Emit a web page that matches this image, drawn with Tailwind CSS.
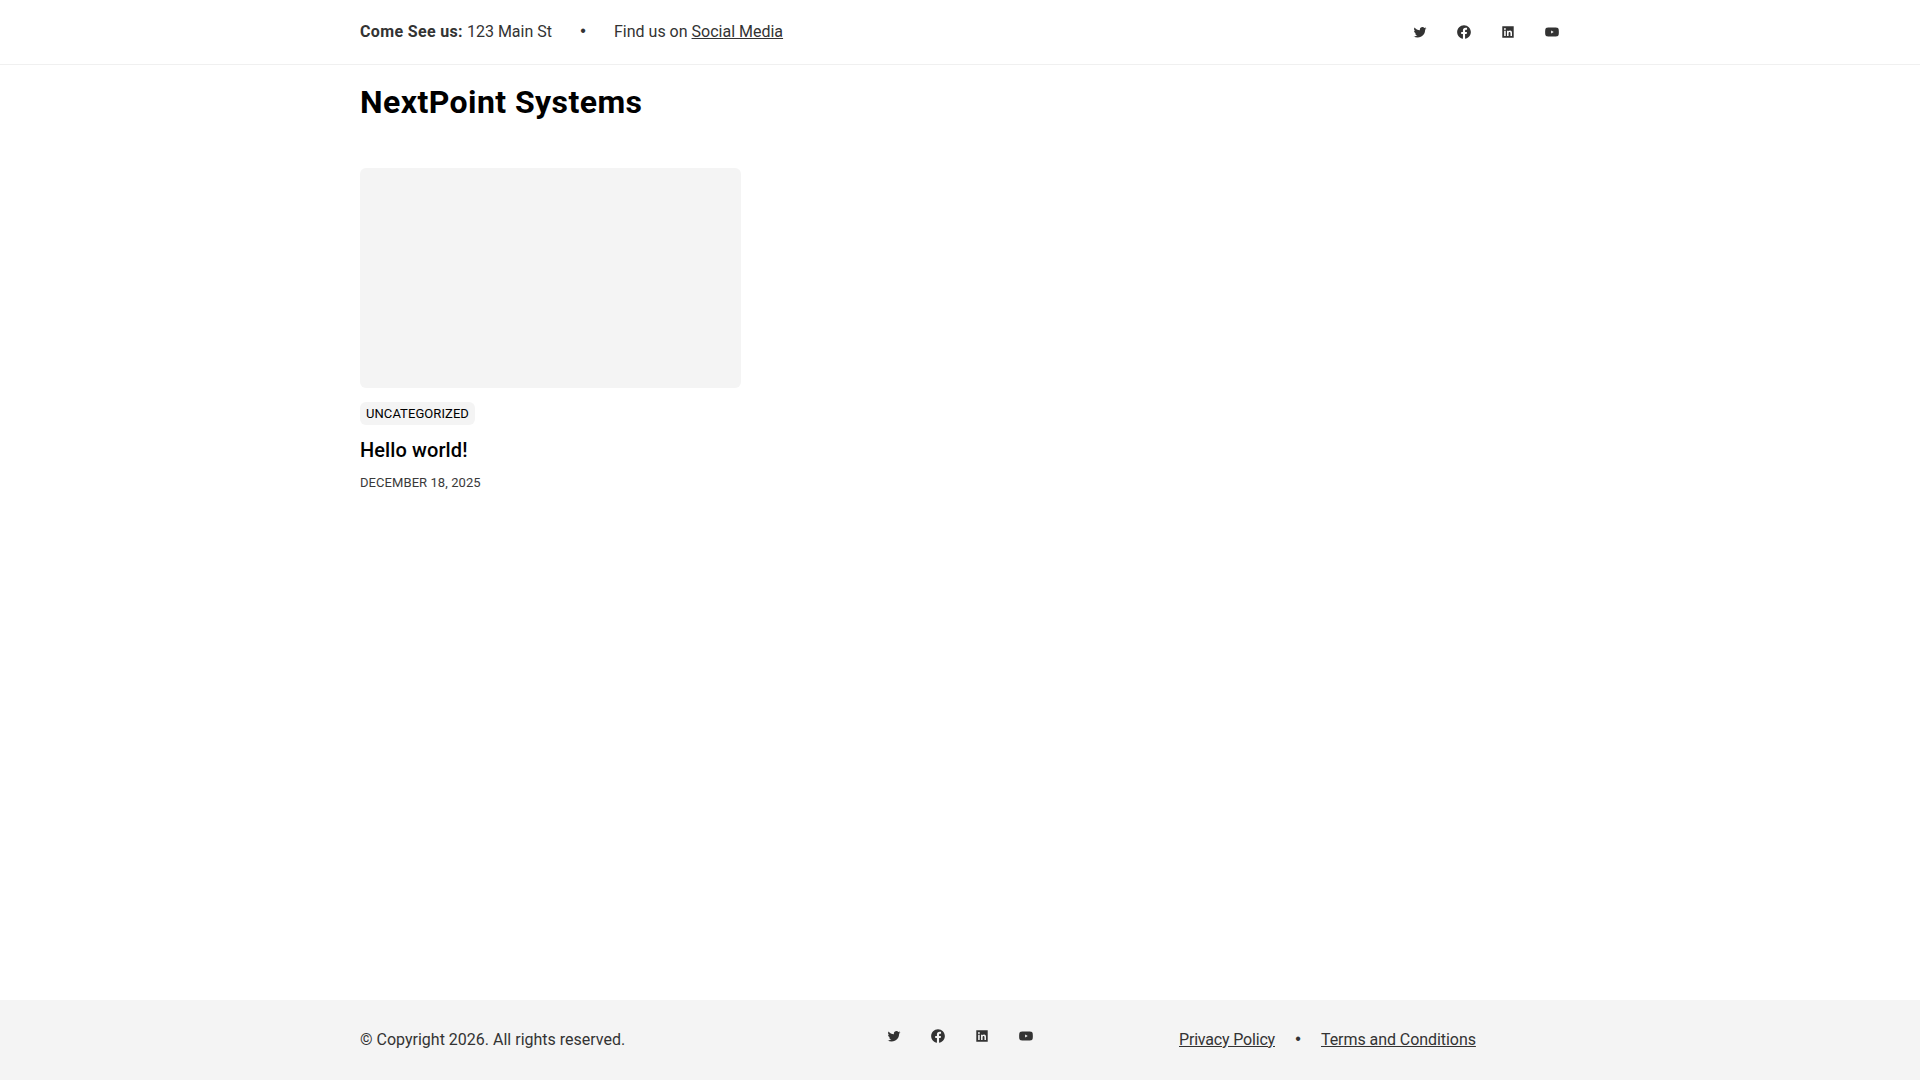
<!DOCTYPE html>
<html lang="en">
<head>
  <meta charset="UTF-8">
  <title>NextPoint Systems</title>
  <script src="https://cdn.jsdelivr.net/npm/@tailwindcss/browser@4"></script>
</head>
<body class="bg-white text-[#333333] font-['Roboto',sans-serif] text-base">
  <div class="min-h-[1080px] flex flex-col">

    <!-- Top bar -->
    <div class="h-[65px] border-b border-[#f0f0f0]">
      <div class="w-[1200px] ml-[360px] h-full flex items-center justify-between">
        <div class="flex items-center">
          <span><strong class="font-bold tracking-[0.35px]">Come See us:</strong> 123 Main St</span>
          <span class="w-[62px] text-center font-['Liberation_Sans',sans-serif] -translate-y-px">•</span>
          <span>Find us on <a href="#" class="underline">Social Media</a></span>
        </div>
        <div class="flex items-center gap-7">
          <svg class="w-4 h-4 fill-current" viewBox="-1 -1 26 26"><path d="M22.46 6c-.77.35-1.6.58-2.46.69.88-.53 1.56-1.37 1.88-2.38-.83.5-1.75.85-2.72 1.05C18.37 4.5 17.26 4 16 4c-2.35 0-4.27 1.92-4.27 4.29 0 .34.04.67.11.98C8.28 9.09 5.11 7.38 3 4.79c-.37.63-.58 1.37-.58 2.15 0 1.49.75 2.81 1.91 3.56-.71 0-1.37-.2-1.95-.5v.03c0 2.08 1.48 3.82 3.44 4.21-.36.1-.74.15-1.13.15-.27 0-.54-.03-.8-.08.54 1.69 2.11 2.95 4 2.98-1.46 1.16-3.31 1.84-5.33 1.84-.34 0-.68-.02-1.02-.06C3.44 20.29 5.7 21 8.12 21 16 21 20.33 14.46 20.33 8.79c0-.19 0-.37-.01-.56.84-.6 1.56-1.36 2.14-2.23z"/></svg>
          <svg class="w-4 h-4 fill-current" viewBox="-2 -2 28 28"><path d="M24 12.07C24 5.4 18.63 0 12 0S0 5.4 0 12.07c0 6.03 4.39 11.02 10.13 11.93v-8.44H7.08v-3.49h3.05V9.41c0-3.02 1.79-4.69 4.53-4.69 1.31 0 2.68.24 2.68.24v2.97h-1.51c-1.49 0-1.96.93-1.96 1.89v2.25h3.33l-.53 3.49h-2.8V24C19.61 23.09 24 18.1 24 12.07z"/></svg>
          <svg class="w-4 h-4 fill-current" viewBox="-2 -2 28 28"><path d="M22 2H2v20h20V2zM8 19H5.3V9.6H8V19zM6.65 8.4a1.6 1.6 0 1 1 0-3.2 1.6 1.6 0 0 1 0 3.2zM19 19h-2.700v-4.600c0-1.100 0-2.500-1.500-2.500s-1.800 1.200-1.800 2.400V19h-2.700V9.600h2.600v1.300h.04c.36-.7 1.250-1.500 2.600-1.500 2.750 0 3.460 1.800 3.460 4.200V19z"/></svg>
          <svg class="w-4 h-4 fill-current" viewBox="-2 -2 28 28"><path d="M23.5 6.600a3 3 0 0 0-2.100-2.100C19.500 4 12 4 12 4s-7.500 0-9.400.5A3 3 0 0 0 .5 6.600C0 8.500 0 12 0 12s0 3.500 .5 5.400a3 3 0 0 0 2.100 2.100C4.500 20 12 20 12 20s7.500 0 9.400-.5a3 3 0 0 0 2.100-2.100C24 15.500 24 12 24 12s0-3.500-.5-5.400zM10.500 14.500v-5l4.500 2.500-4.500 2.500z"/></svg>
        </div>
      </div>
    </div>

    <!-- Main -->
    <main class="flex-1 w-[1200px] ml-[360px]">
      <h1 class="mt-[17px] text-[32px] leading-[40px] font-bold tracking-[0.43px] text-black">NextPoint Systems</h1>
      <article class="mt-[46px] w-[381px]">
        <div class="h-[220px] bg-[#f4f4f4] rounded-md"></div>
        <span class="inline-block mt-[14px] h-[23px] px-1.5 bg-[#f4f4f4] rounded-md text-[13px] leading-[24px] tracking-[0.07px] text-black">UNCATEGORIZED</span>
        <h2 class="mt-[11px] text-xl leading-7 font-medium tracking-[0.1px] text-black">Hello world!</h2>
        <p class="mt-[9px] text-[13px] leading-5 tracking-[0.07px] text-[#3a3a3a]">DECEMBER 18, 2025</p>
      </article>
    </main>

    <!-- Footer -->
    <footer class="h-[80px] bg-[#f4f4f4]">
      <div class="w-[1200px] ml-[360px] h-full flex items-center">
        <div class="w-[526px]">© Copyright 2026. All rights reserved.</div>
        <div class="w-[293px] flex items-center gap-7 mb-[8px]">
          <svg class="w-4 h-4 fill-current" viewBox="-1 -1 26 26"><path d="M22.46 6c-.77.35-1.6.58-2.46.69.88-.53 1.56-1.37 1.88-2.38-.83.5-1.75.85-2.72 1.05C18.37 4.5 17.26 4 16 4c-2.35 0-4.27 1.92-4.27 4.29 0 .34.04.67.11.98C8.28 9.09 5.11 7.38 3 4.79c-.37.63-.58 1.37-.58 2.15 0 1.49.75 2.81 1.91 3.56-.71 0-1.37-.2-1.95-.5v.03c0 2.08 1.48 3.82 3.44 4.21-.36.1-.74.15-1.13.15-.27 0-.54-.03-.8-.08.54 1.69 2.11 2.95 4 2.98-1.46 1.16-3.31 1.84-5.33 1.84-.34 0-.68-.02-1.02-.06C3.44 20.29 5.7 21 8.12 21 16 21 20.33 14.46 20.33 8.79c0-.19 0-.37-.01-.56.84-.6 1.56-1.36 2.14-2.23z"/></svg>
          <svg class="w-4 h-4 fill-current" viewBox="-2 -2 28 28"><path d="M24 12.07C24 5.4 18.63 0 12 0S0 5.4 0 12.07c0 6.03 4.39 11.02 10.13 11.93v-8.44H7.08v-3.49h3.05V9.41c0-3.02 1.79-4.69 4.53-4.69 1.31 0 2.68.24 2.68.24v2.97h-1.51c-1.49 0-1.96.93-1.96 1.89v2.25h3.33l-.53 3.49h-2.8V24C19.61 23.09 24 18.1 24 12.07z"/></svg>
          <svg class="w-4 h-4 fill-current" viewBox="-2 -2 28 28"><path d="M22 2H2v20h20V2zM8 19H5.3V9.6H8V19zM6.65 8.4a1.6 1.6 0 1 1 0-3.2 1.6 1.6 0 0 1 0 3.2zM19 19h-2.700v-4.600c0-1.100 0-2.500-1.500-2.500s-1.800 1.200-1.800 2.400V19h-2.700V9.600h2.600v1.300h.04c.36-.7 1.250-1.500 2.600-1.500 2.750 0 3.460 1.800 3.460 4.200V19z"/></svg>
          <svg class="w-4 h-4 fill-current" viewBox="-2 -2 28 28"><path d="M23.5 6.600a3 3 0 0 0-2.100-2.100C19.500 4 12 4 12 4s-7.500 0-9.400.5A3 3 0 0 0 .5 6.600C0 8.500 0 12 0 12s0 3.500 .5 5.400a3 3 0 0 0 2.100 2.100C4.500 20 12 20 12 20s7.500 0 9.400-.5a3 3 0 0 0 2.100-2.100C24 15.500 24 12 24 12s0-3.500-.5-5.400zM10.500 14.500v-5l4.500 2.500-4.500 2.500z"/></svg>
        </div>
        <div class="flex items-center">
          <a href="#" class="underline tracking-[-0.18px]">Privacy Policy</a>
          <span class="w-[46px] text-center font-['Liberation_Sans',sans-serif] -translate-y-px">•</span>
          <a href="#" class="underline tracking-[-0.06px]">Terms and Conditions</a>
        </div>
      </div>
    </footer>
  </div>
</body>
</html>
